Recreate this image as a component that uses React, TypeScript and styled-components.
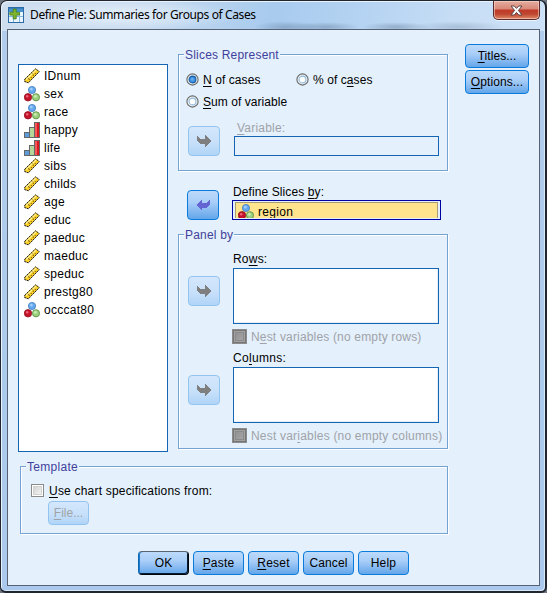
import React from "react";
import styled, { createGlobalStyle, css } from "styled-components";

const GlobalStyle = createGlobalStyle`
  * { box-sizing: border-box; }
  body { margin: 0; background: #6f7680; overflow: hidden; }
  button { padding: 0; margin: 0; }
`;

const Frame = styled.div`
  width: 547px;
  height: 593px;
  display: flex;
  flex-direction: column;
  padding: 0 5px 5px 5px;
  border: 2px solid #20252e;
  border-top-width: 1px;
  border-left-width: 1px;
  border-radius: 7px 7px 6px 6px;
  box-shadow: inset 1px 1px 0 #e9f3fd, inset -1px -1px 0 #d6e8fa;
  background:
    radial-gradient(ellipse 32px 6px at 285px 26px, rgba(70, 95, 125, 0.32), transparent),
    radial-gradient(ellipse 34px 5px at 325px 26px, rgba(70, 95, 125, 0.34), transparent),
    radial-gradient(ellipse 34px 5px at 395px 26px, rgba(70, 95, 125, 0.34), transparent),
    radial-gradient(ellipse 46px 6px at 458px 26px, rgba(70, 95, 125, 0.24), transparent),
    radial-gradient(ellipse 120px 16px at 120px 14px, rgba(240, 247, 255, 0.75), transparent),
    linear-gradient(100deg, #cfdfef 0, #c4d9ef 150px, #a8cbee 270px, #b5d3f2 360px, #c8def5 460px, #cde2f7 547px) top / 100% 30px no-repeat,
    linear-gradient(#b2cdeb, #aac9ec);
  font: 12px/14px "Liberation Sans", Arial, sans-serif;
  color: #000;
`;

const TitleBar = styled.header`
  height: 28px;
  flex: none;
  display: flex;
  align-items: flex-start;
  padding-left: 2px;
`;

const AppIcon = styled.svg`
  width: 16px;
  height: 16px;
  margin-top: 6px;
`;

const Title = styled.h1`
  margin: 5px 0 0 6px;
  flex: 1;
  font: 12px/18px "Noto Sans", "Open Sans", sans-serif;
  letter-spacing: -0.38px;
  white-space: nowrap;
`;

const CloseButton = styled.button`
  width: 47px;
  height: 19px;
  border: 1px solid #5b2a2c;
  border-top: 0;
  border-radius: 0 0 5px 5px;
  background: linear-gradient(#e5ada0 0, #d98878 8px, #c03a28 9px, #bf4630 13px, #dd8a68 18px);
  box-shadow: inset 0 0 0 1px rgba(255, 220, 210, 0.55), 0 1px 0 rgba(255, 255, 255, 0.6);
  display: flex;
  align-items: center;
  justify-content: center;
`;

const Client = styled.main`
  flex: 1;
  width: 533px;
  margin-left: 1px;
  border: 1px solid #566273;
  background: #e4f0fc;
  display: flex;
  flex-direction: column;
`;

const Upper = styled.div`
  height: 436px;
  flex: none;
  display: flex;
`;

const VariableList = styled.ul`
  width: 150px;
  height: 388px;
  margin: 34px 0 0 10px;
  padding: 2px 5px;
  border: 1px solid #1565b5;
  background: #fff;
  list-style: none;
`;

const Variable = styled.li`
  height: 18px;
  display: flex;
  align-items: center;
  gap: 4px;
`;

const Glyph = styled.svg`
  width: 16px;
  height: 16px;
  flex: none;
`;

const Text = styled.span<{ $spacing?: number; $disabled?: boolean }>`
  white-space: nowrap;
  letter-spacing: ${(p) => p.$spacing ?? 0.2}px;
  color: ${(p) => (p.$disabled ? "#9fa3a8" : "inherit")};
  u {
    text-decoration: underline;
    text-decoration-thickness: 1px;
    text-underline-offset: 2px;
    text-decoration-skip-ink: none;
  }
`;

const Groups = styled.div`
  width: 270px;
  margin: 24px 0 0 10px;
  display: flex;
  flex-direction: column;
`;

const Group = styled.section<{ $height: number; $top?: number }>`
  height: ${(p) => p.$height}px;
  margin-top: ${(p) => p.$top ?? 0}px;
  flex: none;
  border: 1px solid #74a3d3;
  box-shadow: 1px 1px 0 #fff, inset 1px 1px 0 #fff;
`;

const Legend = styled.h2`
  width: fit-content;
  height: 14px;
  margin: -7px 0 0 5px;
  padding: 0 1px;
  background: #e4f0fc;
  color: #41419b;
  font: inherit;
`;

const Line = styled.div<{ $left: number; $top: number; $gap?: number }>`
  display: flex;
  padding-left: ${(p) => p.$left}px;
  margin-top: ${(p) => p.$top}px;
  gap: ${(p) => p.$gap ?? 0}px;
`;

const Choice = styled.label<{ $width?: number; $gap?: number }>`
  display: flex;
  align-items: center;
  height: 15px;
  gap: ${(p) => p.$gap ?? 4}px;
  width: ${(p) => (p.$width ? `${p.$width}px` : "auto")};
`;

const Stack = styled.div<{ $top?: number }>`
  display: flex;
  flex-direction: column;
  align-items: flex-start;
  margin-top: ${(p) => p.$top ?? 0}px;
`;

const FieldLabel = styled.div<{ $indent?: number; $height: number }>`
  height: ${(p) => p.$height}px;
  padding-left: ${(p) => p.$indent ?? 0}px;
`;

const Field = styled.div<{ $width: number; $height: number; $filled?: boolean }>`
  width: ${(p) => p.$width}px;
  height: ${(p) => p.$height}px;
  border: 1px solid #1565b5;
  background: ${(p) => (p.$filled ? "#fff" : "#e4f0fc")};
  box-shadow: ${(p) => (p.$filled ? "inset -1px -1px 0 #e8eef5" : "none")};
`;

const FocusField = styled.div`
  width: 209px;
  height: 20px;
  border: 1px solid #0000a0;
  padding: 1px 2px;
  background: #e4f0fc;
`;

const Selected = styled.div`
  height: 16px;
  border: 1px solid #a89c72;
  border-bottom: 0;
  background: #ffe48d;
  display: flex;
  align-items: flex-start;
  padding: 1px 0 0 2px;
  gap: 4px;
  overflow: hidden;
  line-height: 17px;
`;

const enabledFace = css`
  border: 1px solid #0a7bdb;
  background: linear-gradient(#bcdafb 0, #a9cef8 40%, #8dbdf2 65%, #62a6ea 100%);
  color: #000;
`;
const disabledFace = css`
  border: 1px solid #93c4f0;
  background: linear-gradient(#d4e7fc, #c7e0fa 55%, #b0d4f7);
  color: #9fa3a8;
`;

const ArrowButton = styled.button<{ $enabled?: boolean }>`
  width: 32px;
  height: 30px;
  flex: none;
  border-radius: 4px;
  ${(p) => (p.$enabled ? enabledFace : disabledFace)}
  display: flex;
  align-items: center;
  justify-content: center;
`;

const PushButton = styled.button<{ $width: number; $disabled?: boolean; $primary?: boolean }>`
  width: ${(p) => p.$width}px;
  height: 24px;
  flex: none;
  border-radius: 4px;
  font: inherit;
  ${(p) => (p.$disabled ? disabledFace : enabledFace)}
  ${(p) =>
    p.$primary &&
    css`
      border-color: #5b6570 #00060c #00060c #1166b0;
      box-shadow: inset -1px -1px 0 #061c33, inset 1px 0 0 #1a7ad0;
    `}
`;

const Side = styled.aside`
  margin: 14px 0 0 17px;
  display: flex;
  flex-direction: column;
  gap: 2px;
`;

const Template = styled(Group)`
  width: 428px;
  margin-left: 12px;
`;

const Actions = styled.footer`
  display: flex;
  gap: 4px;
  margin: 17px 0 0 130px;
`;

const Check = styled.span<{ $disabled?: boolean }>`
  flex: none;
  width: ${(p) => (p.$disabled ? 15 : 13)}px;
  height: ${(p) => (p.$disabled ? 15 : 13)}px;
  ${(p) =>
    p.$disabled
      ? css`
          border: 1px solid #8c8c8c;
          background: linear-gradient(135deg, #8b8b8b, #acacac);
          box-shadow: inset 0 0 0 1px #757575, inset 0 0 0 2px #a2a2a2, inset 0 0 0 3px #8a8a8a;
        `
      : css`
          border: 1px solid #8b8b8b;
          background: linear-gradient(135deg, #c9c9c9, #fdfdfd);
          box-shadow: inset 0 0 0 1px #fff, inset 0 0 0 2px #d2d2d2;
        `}
`;

function Radio({ checked }: { checked?: boolean }) {
  return (
    <svg width="13" height="13" viewBox="0 0 13 13">
      <circle cx="6.5" cy="6.5" r="5.6" fill="#f2f2ee" stroke="#66696b" strokeWidth="1.1" />
      <circle cx="6.5" cy="6.5" r="3.4" fill={checked ? "#3c8ede" : "#fff"} stroke={checked ? "#135ca6" : "#8fbbe0"} strokeWidth="1.1" />
      {checked && <circle cx="6.3" cy="6.2" r="1.5" fill="#64aaf0" />}
    </svg>
  );
}

function Arrow({ back }: { back?: boolean }) {
  const d = "M0 1H1L3 3.5H8V0L14 6 8 12V9H4L1 7 0 5Z";
  return (
    <svg width="14" height="12" viewBox="0 0 14 12" shapeRendering="crispEdges">
      <path d={d} fill={back ? "#6464d2" : "#7f7f7f"} transform={back ? "translate(14 0) scale(-1 1)" : undefined} />
    </svg>
  );
}

type Kind = "scale" | "nominal" | "ordinal";

function MeasureIcon({ kind }: { kind: Kind }) {
  if (kind === "scale")
    return (
      <Glyph viewBox="0 0 16 16">
        <path d="M.7 11.2 11.6.8 15.3 3.6 4.4 14.8.7 13.6Z" fill="#fbcf24" stroke="#24221c" strokeWidth="1" strokeDasharray="2.2 .5" />
        <path d="M2.2 11.5 12 2.2" stroke="#fff0a0" strokeWidth="1.1" />
        <path d="m5 11.2.9.9M7 9.2l.9.9M9 7.2l.9.9M11 5.2l.9.9M4 9.9l.8.8M8.4 5.6l.8.8" stroke="#3b3212" strokeWidth=".9" />
      </Glyph>
    );
  if (kind === "nominal")
    return (
      <Glyph viewBox="0 0 16 16">
        <circle cx="8" cy="4" r="3.6" fill="#66a8ee" stroke="#3c7cc0" strokeWidth=".8" />
        <circle cx="7.3" cy="3" r="1.5" fill="#9dcbfa" />
        <circle cx="4" cy="11.3" r="3.7" fill="#c5142c" stroke="#8f1020" strokeWidth=".8" />
        <circle cx="3.2" cy="10.2" r="1.2" fill="#ee6677" />
        <circle cx="12" cy="11.3" r="3.6" fill="#9bcf7d" stroke="#558a3a" strokeWidth=".8" />
        <circle cx="11.3" cy="10.3" r="1.5" fill="#c6eaaf" />
      </Glyph>
    );
  return (
    <Glyph viewBox="0 0 16 16" shapeRendering="crispEdges">
      <rect x=".5" y="10.5" width="5" height="5" fill="#5b9bd8" stroke="#666" />
      <rect x="5.5" y="5.5" width="5" height="10" fill="#b4d69a" stroke="#666" />
      <rect x="10.5" y=".5" width="5" height="15" fill="#dc1a1f" stroke="#666" />
      <rect x="11" y="1" width="2" height="14" fill="#f4575a" />
    </Glyph>
  );
}

const variables: [string, Kind][] = [
  ["IDnum", "scale"],
  ["sex", "nominal"],
  ["race", "nominal"],
  ["happy", "ordinal"],
  ["life", "ordinal"],
  ["sibs", "scale"],
  ["childs", "scale"],
  ["age", "scale"],
  ["educ", "scale"],
  ["paeduc", "scale"],
  ["maeduc", "scale"],
  ["speduc", "scale"],
  ["prestg80", "scale"],
  ["occcat80", "nominal"],
];

export default function App() {
  return (
    <>
      <GlobalStyle />
      <Frame>
        <TitleBar>
          <AppIcon viewBox="0 0 16 16">
            <rect x=".5" y=".5" width="15" height="15" fill="#2b6fae" stroke="#2a6ba8" />
            <path d="M1 5h14v10H1z" fill="#e9f4fc" />
            <path d="M1 1.5h14v3.5H1z" fill="#4a93cc" />
            <path d="M1 9.5h14M5.5 5v10M11.5 5v10" stroke="#86b8de" />
            <path d="M5.2 2h3v3.3h3.3v2.8H8.2v3.8h-3V8.1H1.8V5.3h3.4z" fill="#7fb52f" stroke="#437d1c" strokeWidth=".8" />
          </AppIcon>
          <Title>Define Pie: Summaries for Groups of Cases</Title>
          <CloseButton aria-label="Close">
            <svg width="13" height="11" viewBox="0 0 13 11">
              <path d="M1 1h3.3l2.2 2.4L8.7 1H12L8.4 5.4 12 10H8.7L6.5 7.4 4.3 10H1l3.6-4.6Z" fill="#fff" stroke="#5c4447" strokeWidth="1" />
            </svg>
          </CloseButton>
        </TitleBar>
        <Client>
          <Upper>
            <VariableList>
              {variables.map(([name, kind]) => (
                <Variable key={name}>
                  <MeasureIcon kind={kind} />
                  <Text $spacing={0.27}>{name}</Text>
                </Variable>
              ))}
            </VariableList>
            <Groups>
              <Group $height={117}>
                <Legend><Text>Slices Represent</Text></Legend>
                <Line $left={7} $top={10}>
                  <Choice $width={110}><Radio checked /><Text $spacing={0.08}><u>N</u> of cases</Text></Choice>
                  <Choice><Radio /><Text $spacing={0.08}>% of c<u>a</u>ses</Text></Choice>
                </Line>
                <Line $left={7} $top={7}>
                  <Choice><Radio /><Text $spacing={0.05}><u>S</u>um of variable</Text></Choice>
                </Line>
                <Line $left={9} $top={12} $gap={14}>
                  <Stack $top={5}><ArrowButton disabled><Arrow /></ArrowButton></Stack>
                  <Stack>
                    <FieldLabel $height={15} $indent={3}><Text $disabled><u>V</u>ariable:</Text></FieldLabel>
                    <Field $width={205} $height={20} />
                  </Stack>
                </Line>
              </Group>
              <Line $left={9} $top={14} $gap={13}>
                <Stack $top={5}><ArrowButton $enabled><Arrow back /></ArrowButton></Stack>
                <Stack>
                  <FieldLabel $height={15} $indent={1}><Text $spacing={0.1}>Define Slices <u>b</u>y:</Text></FieldLabel>
                  <FocusField>
                    <Selected><MeasureIcon kind="nominal" /><Text $spacing={0.3}>region</Text></Selected>
                  </FocusField>
                </Stack>
              </Line>
              <Group $height={215} $top={14}>
                <Legend><Text>Panel by</Text></Legend>
                <Line $left={9} $top={10} $gap={13}>
                  <Stack $top={24}><ArrowButton disabled><Arrow /></ArrowButton></Stack>
                  <Stack>
                    <FieldLabel $height={16}><Text>Ro<u>w</u>s:</Text></FieldLabel>
                    <Field $width={206} $height={56} $filled />
                  </Stack>
                </Line>
                <Line $left={53} $top={5}>
                  <Choice><Check $disabled /><Text $spacing={0.17} $disabled>N<u>e</u>st variables (no empty rows)</Text></Choice>
                </Line>
                <Line $left={9} $top={7} $gap={13}>
                  <Stack $top={24}><ArrowButton disabled><Arrow /></ArrowButton></Stack>
                  <Stack>
                    <FieldLabel $height={16}><Text $spacing={0.3}>Co<u>l</u>umns:</Text></FieldLabel>
                    <Field $width={206} $height={56} $filled />
                  </Stack>
                </Line>
                <Line $left={53} $top={5}>
                  <Choice><Check $disabled /><Text $disabled>Nest var<u>i</u>ables (no empty columns)</Text></Choice>
                </Line>
              </Group>
            </Groups>
            <Side>
              <PushButton $width={64}><Text $spacing={0.05}><u>T</u>itles...</Text></PushButton>
              <PushButton $width={64}><Text $spacing={0.1}><u>O</u>ptions...</Text></PushButton>
            </Side>
          </Upper>
          <Template $height={68}>
            <Legend><Text $spacing={0.3}>Template</Text></Legend>
            <Line $left={10} $top={9}>
              <Choice $gap={5}><Check /><Text><u>U</u>se chart specifications from:</Text></Choice>
            </Line>
            <Line $left={27} $top={3}>
              <PushButton $width={41} $disabled><Text $spacing={0}><u>F</u>ile...</Text></PushButton>
            </Line>
          </Template>
          <Actions>
            <PushButton $width={51} $primary><Text $spacing={0}>OK</Text></PushButton>
            <PushButton $width={51}><Text><u>P</u>aste</Text></PushButton>
            <PushButton $width={51}><Text><u>R</u>eset</Text></PushButton>
            <PushButton $width={51}><Text $spacing={0.1}>Cancel</Text></PushButton>
            <PushButton $width={51}><Text>Help</Text></PushButton>
          </Actions>
        </Client>
      </Frame>
    </>
  );
}
